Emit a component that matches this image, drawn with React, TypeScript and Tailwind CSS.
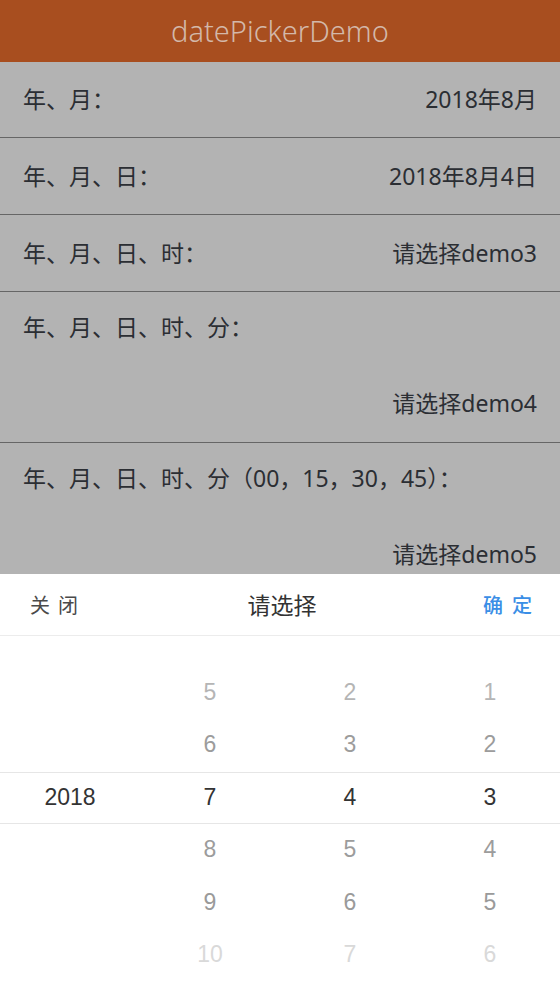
import React from 'react';

const rows = [
  { label: '年、月：', value: '2018年8月', h: 'h-[76px]' },
  { label: '年、月、日：', value: '2018年8月4日', h: 'h-[77px]' },
  { label: '年、月、日、时：', value: '请选择demo3', h: 'h-[77px]' },
  { label: '年、月、日、时、分：', value: '请选择demo4', h: 'h-[151px]', tall: true },
  { label: '年、月、日、时、分（00，15，30，45）：', value: '请选择demo5', h: 'h-[151px]', tall: true },
];

const columns = [
  ['', '', '2018', '', '', ''],
  ['5', '6', '7', '8', '9', '10'],
  ['2', '3', '4', '5', '6', '7'],
  ['1', '2', '3', '4', '5', '6'],
];

const tones = ['text-[#b5b5b5]', 'text-[#9c9c9c]', 'text-[#333333]', 'text-[#9c9c9c]', 'text-[#9a9a9a]', 'text-[#d9d9d9]'];

const App: React.FC = () => {
  return (
    <div className="relative h-[986px] w-[560px] overflow-hidden bg-[#b3b3b3] font-['Noto_Sans','Noto_Sans_CJK_SC',sans-serif]">
      <header className="h-[62px] flex items-center justify-center bg-[#a84e1f]">
        <h1 className="text-[29px] font-light text-[#d3b8a9] font-['Noto_Sans',sans-serif]">datePickerDemo</h1>
      </header>

      <div className="flex flex-col">
        {rows.map((row, i) => (
          <div
            key={i}
            className={`${row.h} border-b border-[#666666] px-[23px] text-[23px] text-[#2b2e33] ${
              row.tall ? 'flex flex-col justify-between pt-[18px] pb-[22px]' : 'flex items-center justify-between'
            }`}
          >
            <span>{row.label}</span>
            <span className={row.tall ? 'self-end' : ''}>{row.value}</span>
          </div>
        ))}
      </div>

      {/* picker sheet */}
      <div className="absolute bottom-0 left-0 right-0 h-[412px] bg-white font-['Noto_Sans_CJK_SC',sans-serif]">
        <div className="h-[62px] border-b border-[#ececec] grid grid-cols-3 items-center">
          <span className="pl-[30px] text-[20px] text-[#4a4a4a] tracking-[8px]">关闭</span>
          <span className="pl-[4px] text-center text-[23px] text-[#333333]">请选择</span>
          <span className="pr-[19px] text-right text-[20px] text-[#3a8ee6] font-medium tracking-[9px]">确定</span>
        </div>
        <div className="relative h-[350px] pt-[30px] font-['Liberation_Sans',sans-serif]">
          <div className="absolute left-0 right-0 top-[136px] h-[52px] border-y border-[#e6e6e6]" />
          <div className="grid grid-cols-4">
            {columns.map((col, c) => (
              <div key={c} className="flex flex-col">
                {col.map((v, r) => (
                  <div key={r} className={`h-[52.4px] flex items-center justify-center text-[23px] ${tones[r]}`}>
                    {v}
                  </div>
                ))}
              </div>
            ))}
          </div>
        </div>
      </div>
    </div>
  );
};

export default App;
